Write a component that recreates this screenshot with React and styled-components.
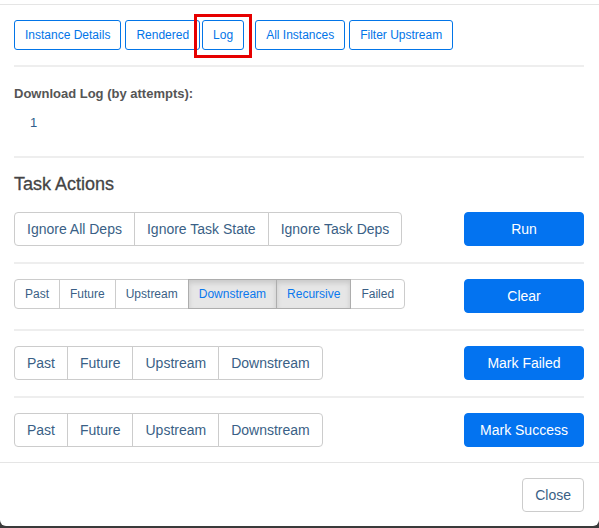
import styled, { createGlobalStyle } from "styled-components";

const GlobalStyle = createGlobalStyle`
  html, body {
    margin: 0;
    padding: 0;
    background: #3a3a3a;
  }
  * {
    box-sizing: border-box;
  }
`;

const topLinks = ["Instance Details", "Rendered", "Log", "All Instances", "Filter Upstream"];

const taskRows = [
  {
    size: "md",
    options: [{ label: "Ignore All Deps" }, { label: "Ignore Task State" }, { label: "Ignore Task Deps" }],
    action: "Run",
  },
  {
    size: "sm",
    options: [
      { label: "Past" },
      { label: "Future" },
      { label: "Upstream" },
      { label: "Downstream", active: true },
      { label: "Recursive", active: true },
      { label: "Failed" },
    ],
    action: "Clear",
  },
  {
    size: "md",
    options: [{ label: "Past" }, { label: "Future" }, { label: "Upstream" }, { label: "Downstream" }],
    action: "Mark Failed",
  },
  {
    size: "md",
    options: [{ label: "Past" }, { label: "Future" }, { label: "Upstream" }, { label: "Downstream" }],
    action: "Mark Success",
  },
];

export default function App() {
  return (
    <>
      <GlobalStyle />
      <Modal>
        <Header />
        <Body>
          <TopNav>
            {topLinks.map((label) =>
              label === "Log" ? (
                <Highlight key={label}>
                  <OutlineButton>{label}</OutlineButton>
                </Highlight>
              ) : (
                <OutlineButton key={label}>{label}</OutlineButton>
              )
            )}
          </TopNav>
          <LogSection>
            <LogTitle>Download Log (by attempts):</LogTitle>
            <AttemptList>
              <li>
                <AttemptLink>1</AttemptLink>
              </li>
            </AttemptList>
          </LogSection>
          <SectionTitle>Task Actions</SectionTitle>
          {taskRows.map((row) => (
            <ActionRow key={row.action}>
              <ButtonGroup>
                {row.options.map((opt) => (
                  <GroupButton key={opt.label} $size={row.size} $active={opt.active}>
                    {opt.label}
                  </GroupButton>
                ))}
              </ButtonGroup>
              <PrimaryButton>{row.action}</PrimaryButton>
            </ActionRow>
          ))}
        </Body>
        <Footer>
          <CloseButton>Close</CloseButton>
        </Footer>
      </Modal>
    </>
  );
}

const Modal = styled.div`
  width: 599px;
  height: 526px;
  background: #fff;
  border-radius: 0 0 6px 6px;
  font-family: "Liberation Sans", Arial, sans-serif;
  overflow: hidden;
`;

const Header = styled.div`
  height: 5px;
  border-bottom: 1px solid #e5e5e5;
`;

const Body = styled.div`
  padding: 15px 15px 0 14px;
`;

const TopNav = styled.div`
  display: flex;
  align-items: center;
  gap: 4px;
  padding-bottom: 15px;
  border-bottom: 2px solid #eee;
`;

const OutlineButton = styled.button`
  font-family: inherit;
  font-size: 12px;
  line-height: 18px;
  padding: 5px 10px;
  border: 1px solid #0275e8;
  border-radius: 3px;
  background: #fff;
  color: #0275e8;
  white-space: nowrap;
`;

const Highlight = styled.span`
  position: relative;
  display: inline-flex;
  margin: 0 7px 0 -2px;

  &::after {
    content: "";
    position: absolute;
    top: -6px;
    right: -8px;
    bottom: -8px;
    left: -8px;
    border: 3px solid #e60000;
    pointer-events: none;
  }
`;

const LogSection = styled.div`
  padding: 18px 0 24px;
  border-bottom: 2px solid #eee;
`;

const LogTitle = styled.div`
  font-size: 13px;
  line-height: 18px;
  font-weight: 700;
  color: #555;
`;

const AttemptList = styled.ul`
  list-style: none;
  margin: 11px 0 0;
  padding: 0 0 0 16px;
  font-size: 13px;
  line-height: 18px;
`;

const AttemptLink = styled.a`
  color: #2f5d8c;
  text-decoration: none;
`;

const SectionTitle = styled.h3`
  margin: 16px 0 3px;
  font-size: 18px;
  line-height: 20px;
  font-weight: 500;
  color: #444;
  -webkit-text-stroke: 0.3px #444;
`;

const ActionRow = styled.div`
  display: flex;
  justify-content: space-between;
  align-items: flex-start;
  padding: 15px 0 16px;
  border-bottom: 2px solid #eee;

  &:last-child {
    border-bottom: none;
    padding-bottom: 15px;
  }
`;

const ButtonGroup = styled.div`
  display: flex;
`;

const GroupButton = styled.button`
  font-family: inherit;
  font-size: ${(p) => (p.$size === "sm" ? "12px" : "14px")};
  line-height: ${(p) => (p.$size === "sm" ? "18px" : "20px")};
  padding: ${(p) => (p.$size === "sm" ? "5px 10px" : "6px 12px")};
  margin-left: -1px;
  border: 1px solid ${(p) => (p.$active ? "#adadad" : "#ccc")};
  background: ${(p) => (p.$active ? "#e6e6e6" : "#fff")};
  box-shadow: ${(p) => (p.$active ? "inset 0 3px 5px rgba(0, 0, 0, 0.125)" : "none")};
  color: ${(p) => (p.$active ? "#0a78ee" : "#3a5f86")};
  white-space: nowrap;
  position: relative;
  z-index: ${(p) => (p.$active ? 1 : 0)};

  &:first-child {
    margin-left: 0;
    border-radius: 4px 0 0 4px;
  }

  &:last-child {
    border-radius: 0 4px 4px 0;
  }
`;

const PrimaryButton = styled.button`
  width: 120px;
  font-family: inherit;
  font-size: 14px;
  line-height: 20px;
  padding: 6px 12px;
  border: 1px solid #0373f0;
  border-radius: 4px;
  background: #0373f0;
  color: #fff;
`;

const Footer = styled.div`
  display: flex;
  justify-content: flex-end;
  padding: 15px 15px 14px;
  border-top: 1px solid #e5e5e5;
`;

const CloseButton = styled.button`
  font-family: inherit;
  font-size: 14px;
  line-height: 20px;
  padding: 6px 12px;
  border: 1px solid #ccc;
  border-radius: 4px;
  background: #fff;
  color: #3a5f86;
`;
